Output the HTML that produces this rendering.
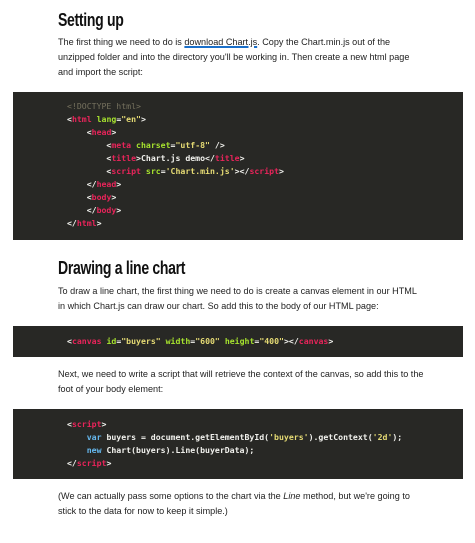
<!DOCTYPE html>
<html><head><style>
body{margin:0;background:#fff;width:475px;height:543px;overflow:hidden;font-family:"Liberation Sans",sans-serif;position:relative}
h2{position:absolute;left:58px;margin:0;font-family:"Liberation Sans",sans-serif;font-weight:bold;font-size:18px;letter-spacing:-0.4px;color:#111;line-height:20px;transform:scaleX(0.78);transform-origin:left center;white-space:nowrap}
p{position:absolute;left:58px;margin:0;font-size:9.1px;line-height:15px;color:#222;width:368px}
a{color:#222;text-decoration:underline;text-decoration-color:#1a6fc9;text-decoration-thickness:1.5px}
.code{position:absolute;left:13px;width:450px;background:#282825}
pre{position:absolute;left:54px;margin:0;font-family:"DejaVu Sans Mono","Liberation Mono",monospace;font-size:8.2px;line-height:13px;color:#f2f2ee;font-weight:bold}
.t{color:#e8245a}.a{color:#a6e22e}.s{color:#e6db74}.d{color:#75715e;font-weight:normal}.k{color:#66b9ef}
</style></head><body>
<h2 style="top:10px">Setting up</h2>
<p style="top:35px">The first thing we need to do is <a>download Chart.js</a>. Copy the Chart.min.js out of the unzipped folder and into the directory you'll be working in. Then create a new html page and import the script:</p>
<div class="code" style="top:92px;height:148px"><pre style="top:8px"><span class="d">&lt;!DOCTYPE html&gt;</span>
&lt;<span class="t">html</span> <span class="a">lang</span>=<span class="s">"en"</span>&gt;
    &lt;<span class="t">head</span>&gt;
        &lt;<span class="t">meta</span> <span class="a">charset</span>=<span class="s">"utf-8"</span> /&gt;
        &lt;<span class="t">title</span>&gt;Chart.js demo&lt;/<span class="t">title</span>&gt;
        &lt;<span class="t">script</span> <span class="a">src</span>=<span class="s">'Chart.min.js'</span>&gt;&lt;/<span class="t">script</span>&gt;
    &lt;/<span class="t">head</span>&gt;
    &lt;<span class="t">body</span>&gt;
    &lt;/<span class="t">body</span>&gt;
&lt;/<span class="t">html</span>&gt;</pre></div>
<h2 style="top:258px">Drawing a line chart</h2>
<p style="top:284px">To draw a line chart, the first thing we need to do is create a canvas element in our HTML in which Chart.js can draw our chart. So add this to the body of our HTML page:</p>
<div class="code" style="top:326px;height:31px"><pre style="top:9px">&lt;<span class="t">canvas</span> <span class="a">id</span>=<span class="s">"buyers"</span> <span class="a">width</span>=<span class="s">"600"</span> <span class="a">height</span>=<span class="s">"400"</span>&gt;&lt;/<span class="t">canvas</span>&gt;</pre></div>
<p style="top:367px">Next, we need to write a script that will retrieve the context of the canvas, so add this to the foot of your body element:</p>
<div class="code" style="top:409px;height:70px"><pre style="top:9px">&lt;<span class="t">script</span>&gt;
    <span class="k">var</span> buyers = document.getElementById(<span class="s">'buyers'</span>).getContext(<span class="s">'2d'</span>);
    <span class="k">new</span> Chart(buyers).Line(buyerData);
&lt;/<span class="t">script</span>&gt;</pre></div>
<p style="top:489px">(We can actually pass some options to the chart via the <i>Line</i> method, but we're going to stick to the data for now to keep it simple.)</p>
</body></html>
